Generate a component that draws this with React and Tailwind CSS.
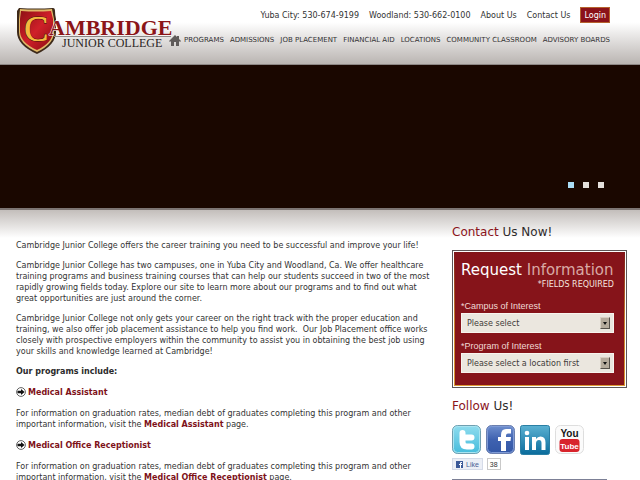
const NAV = [
  "PROGRAMS",
  "ADMISSIONS",
  "JOB PLACEMENT",
  "FINANCIAL AID",
  "LOCATIONS",
  "COMMUNITY CLASSROOM",
  "ADVISORY BOARDS",
];

const PROGRAMS = ["Medical Assistant", "Medical Office Receptionist"];

function Logo() {
  return (
    <svg
      viewBox="0 0 153 48"
      className="h-12 w-[153px] shrink-0 overflow-visible"
      role="img"
      aria-label="Cambridge Junior College"
    >
      <defs>
        <linearGradient id="shield" x1="0" y1="0" x2="1" y2="1">
          <stop offset="0" stopColor="#8e1015" />
          <stop offset="0.5" stopColor="#cf2029" />
          <stop offset="1" stopColor="#8a0d12" />
        </linearGradient>
      </defs>
      <path d="M3 1 Q20 2 37 1 Q39 1 39 4 Q39 8 40 12 V25 Q40 38 21 47 Q1 38 1 25 V12 Q1 8 1 4 Z" fill="#3d2a1a" />
      <path d="M4 2 Q20 3 36 2 L38 12 V25 Q38 37 21 45 Q3 37 3 25 V12 Z" fill="#e0b766" />
      <path d="M5 4 Q20 5 35 4 L37 12 V25 Q36 36 21 43 Q5 36 4 25 V12 Z" fill="url(#shield)" />
      <line x1="38" y1="29.500" x2="155" y2="29.500" stroke="#8d8886" strokeWidth="1" />
      <text x="8" y="34" fontSize="36" fill="#f4b93f" stroke="#5a1a10" strokeWidth="1.500" paintOrder="stroke" className="font-['Liberation_Serif',serif]">
        C
      </text>
      <text x="8.500" y="34" fontSize="36" fill="#f4b93f" className="font-['Liberation_Serif',serif]" aria-hidden="true">
        C
      </text>
      <text x="33" y="28" fontSize="22" fontWeight="bold" fill="#8b1518" stroke="#ffffff" strokeWidth="1" paintOrder="stroke" className="font-['Liberation_Serif',serif]">
        AMBRIDGE
      </text>
      <text x="46" y="40" fontSize="12" fill="#2b2524" className="font-['Liberation_Serif',serif]">
        JUNIOR COLLEGE
      </text>
    </svg>
  );
}

function HomeIcon() {
  return (
    <svg viewBox="0 0 12 11" className="h-[11px] w-3" aria-hidden="true">
      <path d="M6 0 L8 2 V1 H10 V4 L12 6 L11 7 L10 6 V11 H7 V7 H5 V11 H2 V6 L1 7 L0 6 Z" fill="#5f5b5a" />
    </svg>
  );
}

function ArrowIcon() {
  return (
    <svg viewBox="0 0 10 10" className="h-[10px] w-[10px] shrink-0" aria-hidden="true">
      <circle cx="5" cy="5" r="4.4" fill="#ffffff" stroke="#222222" strokeWidth="0.7" />
      <path d="M1.5 3.8 H5 V2 L8.6 5 L5 8 V6.2 H1.5 Z" fill="#111111" />
    </svg>
  );
}

function TwitterIcon() {
  return (
    <svg viewBox="0 0 29 29" className="h-[29px] w-[29px]" aria-hidden="true">
      <defs>
        <linearGradient id="tw" x1="0" y1="0" x2="0" y2="1">
          <stop offset="0" stopColor="#8fdcee" />
          <stop offset="1" stopColor="#45bcdc" />
        </linearGradient>
      </defs>
      <rect x="0.5" y="0.5" width="28" height="28" rx="5" fill="url(#tw)" stroke="#6f9fb0" />
      <rect x="1.5" y="1.5" width="26" height="26" rx="4" fill="none" stroke="#a9e4f1" />
      <path d="M10.500 8 V17 Q10.500 21.500 15 21.500 H19.500 M10.500 12.500 H19.500" fill="none" stroke="#ffffff" strokeWidth="6" strokeLinecap="round" strokeLinejoin="round" />
    </svg>
  );
}

function FacebookIcon() {
  return (
    <svg viewBox="0 0 29 29" className="h-[29px] w-[29px]" aria-hidden="true">
      <defs>
        <linearGradient id="fb" x1="0" y1="0" x2="0" y2="1">
          <stop offset="0" stopColor="#6f8fce" />
          <stop offset="0.5" stopColor="#3f62b0" />
          <stop offset="1" stopColor="#3357a6" />
        </linearGradient>
      </defs>
      <rect x="0.5" y="0.5" width="28" height="28" rx="5" fill="url(#fb)" stroke="#6b7fae" />
      <rect x="1.5" y="1.5" width="26" height="26" rx="4" fill="none" stroke="#7f9bd6" />
      <path d="M15 26 V16 H12 V12 H15 V10 Q15 4 20 4 H25 V8.500 H22 Q20 8.500 20 10.500 V12 H25 L24.500 16 H20 V26 Z" fill="#ffffff" />
    </svg>
  );
}

function LinkedInIcon() {
  return (
    <svg viewBox="0 0 30 30" className="h-[30px] w-[30px]" aria-hidden="true">
      <defs>
        <linearGradient id="li" x1="0" y1="0" x2="0" y2="1">
          <stop offset="0" stopColor="#5bb1d2" />
          <stop offset="1" stopColor="#0a6c9c" />
        </linearGradient>
      </defs>
      <rect x="0.5" y="0.5" width="29" height="29" rx="2" fill="url(#li)" stroke="#2a7fa4" />
      <circle cx="7" cy="8" r="2.300" fill="#ffffff" />
      <path d="M5 12 H9 V25 H5 Z M12 12 H16 V14 Q17.500 11.500 20.500 11.500 Q25.500 11.500 25.500 17.500 V25 H21.500 V18 Q21.500 15 19 15 Q16 15 16 18.500 V25 H12 Z" fill="#ffffff" />
    </svg>
  );
}

function YouTubeIcon() {
  return (
    <svg viewBox="0 0 30 30" className="h-[30px] w-[30px]" aria-hidden="true">
      <rect x="0.5" y="0.5" width="28" height="28" rx="5" fill="#fbfbfb" stroke="#dedede" />
      <rect x="4.500" y="14" width="20" height="13" rx="3" fill="#d8242c" />
      <text x="14.500" y="12" textAnchor="middle" fontSize="10" fontWeight="bold" fill="#161616" className="font-['Liberation_Sans',sans-serif]">
        You
      </text>
      <text x="14.500" y="23.500" textAnchor="middle" fontSize="8" fontWeight="bold" fill="#ffffff" className="font-['Liberation_Sans',sans-serif]">
        Tube
      </text>
    </svg>
  );
}

function Field({ id, label, value }) {
  return (
    <div>
      <label htmlFor={id} className="block font-['Liberation_Sans',Arial,sans-serif] text-[9px] leading-[14px] text-[#f0d9d4]">
        {label}
      </label>
      <div className="relative">
        <select
          id={id}
          className="block h-5 w-full appearance-none border border-[#f8f4ee] bg-[#ebe7df] pl-[5px] text-[8px] text-[#3f3b39]"
        >
          <option>{value}</option>
        </select>
        <span className="pointer-events-none absolute top-1 right-1 flex h-3 w-[10px] items-center justify-center border border-t-[#d8d0c4] border-r-[#55504a] border-b-[#55504a] border-l-[#d8d0c4] bg-[#b5ab9c]">
          <svg viewBox="0 0 4 3" className="h-[3px] w-1" aria-hidden="true">
            <path d="M0 0 H4 L2 3 Z" fill="#111111" />
          </svg>
        </span>
      </div>
    </div>
  );
}

function SideHeading({ accent, rest }) {
  return (
    <h2 className="text-[12px] leading-4 text-[#2f2b2b]">
      <span className="text-[#8b141b]">{accent}</span> {rest}
    </h2>
  );
}

export default function App() {
  return (
    <div className="bg-white font-['DejaVu_Sans',Verdana,sans-serif] text-[8px] leading-[11px] text-[#333333]">
      <header className="flex h-[65px] items-start justify-between border-b border-[#8d8785] bg-linear-to-b from-white from-35% to-[#bab5b2] pt-[7px] pr-[30px] pl-4">
        <Logo />
        <div className="flex flex-col items-end">
          <div className="flex items-center gap-[10px] whitespace-nowrap">
            <span>Yuba City: 530-674-9199</span>
            <span>Woodland: 530-662-0100</span>
            <a href="#about">About Us</a>
            <a href="#contact">Contact Us</a>
            <button className="h-4 border border-[#b5622c] bg-[#8b1219] px-[3px] text-white">Login</button>
          </div>
          <nav className="mt-3 flex items-center gap-[3px] text-[7px] whitespace-nowrap">
            <a href="#home" aria-label="Home">
              <HomeIcon />
            </a>
            <ul className="flex gap-[6px]">
              {NAV.map((item) => (
                <li key={item}>
                  <a href="#nav">{item}</a>
                </li>
              ))}
            </ul>
          </nav>
        </div>
      </header>

      <section className="flex h-[143px] items-end justify-end gap-[9px] bg-[#1a0700] pr-9 pb-5" aria-label="Slides">
        <button aria-label="Slide 1" className="size-[6px] bg-[#aadcf5]" />
        <button aria-label="Slide 2" className="size-[6px] bg-[#e4dfdb]" />
        <button aria-label="Slide 3" className="size-[6px] bg-[#e4dfdb]" />
      </section>

      <div className="border-t-2 border-[#7d7573] bg-linear-to-b from-[#c3bebb] to-white to-[28px]">
        <div className="flex items-start justify-between pr-[13px] pl-4">
          <main className="w-[421px] shrink pt-[30px]">
            <div className="flex flex-col gap-[9px]">
              <p>Cambridge Junior College offers the career training you need to be successful and improve your life!</p>
              <p>
                Cambridge Junior College has two campuses, one in Yuba City and Woodland, Ca. We offer healthcare training
                programs and business training courses that can help our students succeed in two of the most rapidly growing
                fields today. Explore our site to learn more about our programs and to find out what great opportunities are
                just around the corner.
              </p>
              <p>
                Cambridge Junior College not only gets your career on the right track with the proper education and
                training, we also offer job placement assistance to help you find work.&nbsp; Our Job Placement office works
                closely with prospective employers within the community to assist you in obtaining the best job using your
                skills and knowledge learned at Cambridge!
              </p>
              <p className="font-bold text-[#2b2b2b]">Our programs include:</p>
            </div>
            {PROGRAMS.map((name) => (
              <section key={name} className="mt-[10px] flex flex-col gap-[10px]">
                <h3 className="flex h-[11px] gap-[2px] font-bold text-[#7e1219]">
                  <ArrowIcon />
                  <a href="#program">{name}</a>
                </h3>
                <p>
                  For information on graduation rates, median debt of graduates completing this program and other important
                  information, visit the{" "}
                  <a href="#program" className="font-bold text-[#7e1219]">
                    {name}
                  </a>{" "}
                  page.
                </p>
              </section>
            ))}
          </main>

          <aside className="w-[175px] shrink-0 pt-[14px]">
            <SideHeading accent="Contact" rest="Us Now!" />
            <form className="mt-[10px] border border-[#5c5555] bg-white p-px">
              <div className="bg-linear-to-b from-[#7d1518] via-[#c9822e] to-[#dd9a32] p-px">
                <div className="bg-[#86141a] px-[6px] pt-2 pb-3">
                  <h2 className="text-[15px] leading-[18px] whitespace-nowrap text-white">
                    Request <span className="text-[#d9a9a4]">Information</span>
                  </h2>
                  <p className="mr-1 text-right text-[#f4e3df]">*FIELDS REQUIRED</p>
                  <div className="mt-[9px] mr-1 flex flex-col gap-[6px]">
                    <Field id="campus" label="*Campus of Interest" value="Please select" />
                    <Field id="program" label="*Program of Interest" value="Please select a location first" />
                  </div>
                </div>
              </div>
            </form>
            <div className="mt-[10px]">
              <SideHeading accent="Follow" rest="Us!" />
            </div>
            <div className="mt-[11px] flex gap-[5px]">
              <a href="#twitter" aria-label="Twitter"><TwitterIcon /></a>
              <a href="#facebook" aria-label="Facebook"><FacebookIcon /></a>
              <a href="#linkedin" aria-label="LinkedIn"><LinkedInIcon /></a>
              <a href="#youtube" aria-label="YouTube"><YouTubeIcon /></a>
            </div>
            <div className="mt-[3px] flex items-center gap-1 font-['Liberation_Sans',Arial,sans-serif] text-[7px]">
              <button className="flex h-3 items-center gap-[3px] border border-[#d5dbe8] bg-[#eceff6] px-[3px] text-[#4a5f95]">
                <svg viewBox="0 0 7 7" className="size-[7px]" aria-hidden="true">
                  <rect width="7" height="7" fill="#3b5998" />
                  <path d="M4 7 V4 H3 V3 H4 V2 Q4 1 5 1 H6 V2 H5 V3 H6 V4 H5 V7 Z" fill="#ffffff" />
                </svg>
                Like
              </button>
              <span className="flex h-3 items-center border border-[#c9c9c9] px-[2px]">38</span>
            </div>
            <hr className="mt-[9px] mr-5 border-t border-[#7c8096]" />
          </aside>
        </div>
      </div>
    </div>
  );
}
